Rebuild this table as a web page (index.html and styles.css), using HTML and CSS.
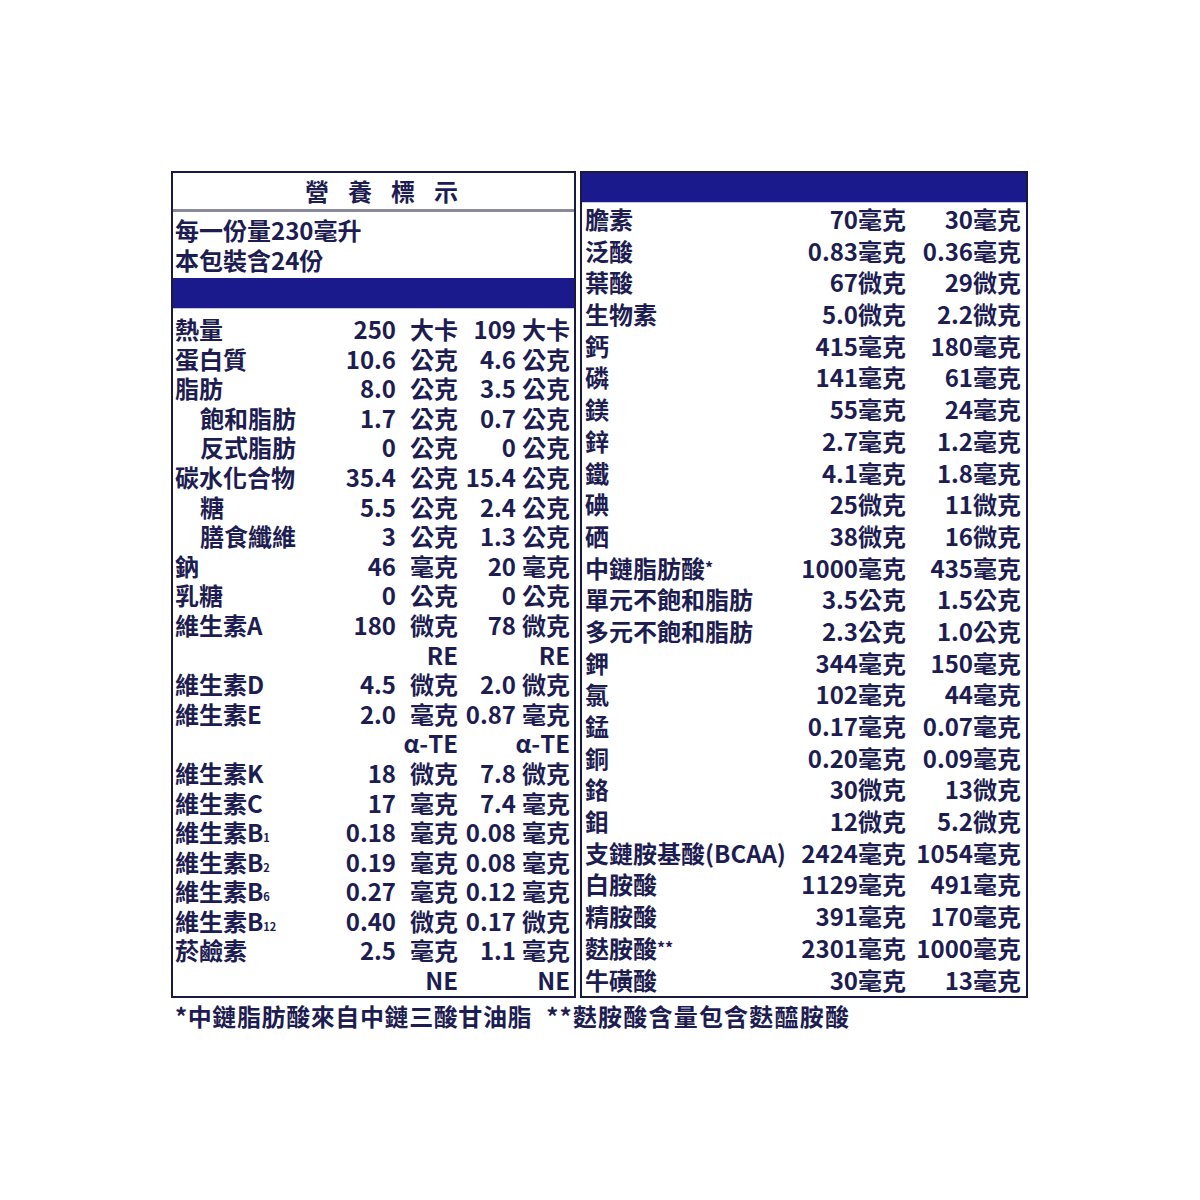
FILE: index.html
```html
<!DOCTYPE html>
<html lang="zh-Hant">
<head>
<meta charset="utf-8">
<title>營養標示</title>
<link rel="stylesheet" href="styles.css">
</head>
<body>
<div class="page">
  <div class="panels">
    <section class="panel left">
      <div class="title">營養標示</div>
      <div class="info">
        <div>每一份量230毫升</div>
        <div>本包裝含24份</div>
      </div>
      <div class="bar"></div>
      <div class="grid lgrid">
        <div class="n">熱量</div><div class="v">250</div><div class="u">大卡</div><div class="v">109</div><div class="u">大卡</div>
        <div class="n">蛋白質</div><div class="v">10.6</div><div class="u">公克</div><div class="v">4.6</div><div class="u">公克</div>
        <div class="n">脂肪</div><div class="v">8.0</div><div class="u">公克</div><div class="v">3.5</div><div class="u">公克</div>
        <div class="n ind">飽和脂肪</div><div class="v">1.7</div><div class="u">公克</div><div class="v">0.7</div><div class="u">公克</div>
        <div class="n ind">反式脂肪</div><div class="v">0</div><div class="u">公克</div><div class="v">0</div><div class="u">公克</div>
        <div class="n">碳水化合物</div><div class="v">35.4</div><div class="u">公克</div><div class="v">15.4</div><div class="u">公克</div>
        <div class="n ind">糖</div><div class="v">5.5</div><div class="u">公克</div><div class="v">2.4</div><div class="u">公克</div>
        <div class="n ind">膳食纖維</div><div class="v">3</div><div class="u">公克</div><div class="v">1.3</div><div class="u">公克</div>
        <div class="n">鈉</div><div class="v">46</div><div class="u">毫克</div><div class="v">20</div><div class="u">毫克</div>
        <div class="n">乳糖</div><div class="v">0</div><div class="u">公克</div><div class="v">0</div><div class="u">公克</div>
        <div class="n">維生素A</div><div class="v">180</div><div class="u">微克</div><div class="v">78</div><div class="u">微克</div>
        <div class="n"></div><div class="s1">RE</div><div class="s2">RE</div>
        <div class="n">維生素D</div><div class="v">4.5</div><div class="u">微克</div><div class="v">2.0</div><div class="u">微克</div>
        <div class="n">維生素E</div><div class="v">2.0</div><div class="u">毫克</div><div class="v">0.87</div><div class="u">毫克</div>
        <div class="n"></div><div class="s1">α-TE</div><div class="s2">α-TE</div>
        <div class="n">維生素K</div><div class="v">18</div><div class="u">微克</div><div class="v">7.8</div><div class="u">微克</div>
        <div class="n">維生素C</div><div class="v">17</div><div class="u">毫克</div><div class="v">7.4</div><div class="u">毫克</div>
        <div class="n">維生素B<span class="sub">1</span></div><div class="v">0.18</div><div class="u">毫克</div><div class="v">0.08</div><div class="u">毫克</div>
        <div class="n">維生素B<span class="sub">2</span></div><div class="v">0.19</div><div class="u">毫克</div><div class="v">0.08</div><div class="u">毫克</div>
        <div class="n">維生素B<span class="sub">6</span></div><div class="v">0.27</div><div class="u">毫克</div><div class="v">0.12</div><div class="u">毫克</div>
        <div class="n">維生素B<span class="sub">12</span></div><div class="v">0.40</div><div class="u">微克</div><div class="v">0.17</div><div class="u">微克</div>
        <div class="n">菸鹼素</div><div class="v">2.5</div><div class="u">毫克</div><div class="v">1.1</div><div class="u">毫克</div>
        <div class="n"></div><div class="s1">NE</div><div class="s2">NE</div>
      </div>
    </section>
    <section class="panel right">
      <div class="bar rbar"></div>
      <div class="grid rgrid">
        <div class="n">膽素</div><div class="c">70毫克</div><div class="c">30毫克</div>
        <div class="n">泛酸</div><div class="c">0.83毫克</div><div class="c">0.36毫克</div>
        <div class="n">葉酸</div><div class="c">67微克</div><div class="c">29微克</div>
        <div class="n">生物素</div><div class="c">5.0微克</div><div class="c">2.2微克</div>
        <div class="n">鈣</div><div class="c">415毫克</div><div class="c">180毫克</div>
        <div class="n">磷</div><div class="c">141毫克</div><div class="c">61毫克</div>
        <div class="n">鎂</div><div class="c">55毫克</div><div class="c">24毫克</div>
        <div class="n">鋅</div><div class="c">2.7毫克</div><div class="c">1.2毫克</div>
        <div class="n">鐵</div><div class="c">4.1毫克</div><div class="c">1.8毫克</div>
        <div class="n">碘</div><div class="c">25微克</div><div class="c">11微克</div>
        <div class="n">硒</div><div class="c">38微克</div><div class="c">16微克</div>
        <div class="n">中鏈脂肪酸<span class="star">*</span></div><div class="c">1000毫克</div><div class="c">435毫克</div>
        <div class="n">單元不飽和脂肪</div><div class="c">3.5公克</div><div class="c">1.5公克</div>
        <div class="n">多元不飽和脂肪</div><div class="c">2.3公克</div><div class="c">1.0公克</div>
        <div class="n">鉀</div><div class="c">344毫克</div><div class="c">150毫克</div>
        <div class="n">氯</div><div class="c">102毫克</div><div class="c">44毫克</div>
        <div class="n">錳</div><div class="c">0.17毫克</div><div class="c">0.07毫克</div>
        <div class="n">銅</div><div class="c">0.20毫克</div><div class="c">0.09毫克</div>
        <div class="n">鉻</div><div class="c">30微克</div><div class="c">13微克</div>
        <div class="n">鉬</div><div class="c">12微克</div><div class="c">5.2微克</div>
        <div class="n">支鏈胺基酸(BCAA)</div><div class="c">2424毫克</div><div class="c">1054毫克</div>
        <div class="n">白胺酸</div><div class="c">1129毫克</div><div class="c">491毫克</div>
        <div class="n">精胺酸</div><div class="c">391毫克</div><div class="c">170毫克</div>
        <div class="n">麩胺酸<span class="star">**</span></div><div class="c">2301毫克</div><div class="c">1000毫克</div>
        <div class="n">牛磺酸</div><div class="c">30毫克</div><div class="c">13毫克</div>
      </div>
    </section>
  </div>
  <div class="note">
    <span class="note1">*中鏈脂肪酸來自中鏈三酸甘油脂</span>
    <span class="note2">**麩胺酸含量包含麩醯胺酸</span>
  </div>
</div>
</body>
</html>
```
FILE: styles.css
```css
html, body {
  margin: 0;
  padding: 0;
  background: #ffffff;
}
body {
  font-family: "Noto Sans CJK TC", "Noto Sans", sans-serif;
  color: #1d1d52;
  font-weight: 700;
}
.page {
  padding: 171px 0 0 171px;
}
.panels {
  display: flex;
  gap: 4px;
  align-items: stretch;
}
.panel {
  border: 2px solid #1a1a3e;
  box-sizing: border-box;
  height: 827px;
}
.left {
  width: 405px;
}
.right {
  width: 448px;
}
.title {
  height: 36px;
  line-height: 36px;
  font-size: 24px;
  letter-spacing: 19px;
  padding-left: 132px;
  border-bottom: 3px solid #8a8a9a;
}
.info {
  font-size: 24px;
  line-height: 30px;
  padding: 3px 0 3px 2px;
}
.bar {
  height: 30px;
  background: #1a1a8c;
  border-bottom: 1px solid #c8c8d4;
}
.rbar {
  height: 29px;
}
.grid {
  display: grid;
  font-size: 24px;
  white-space: nowrap;
}
.lgrid {
  grid-template-columns: 165px 56px 62px 58px 54px;
  grid-auto-rows: 29.6px;
  line-height: 29.6px;
  padding: 5px 0 0 2px;
}
.lgrid .v, .lgrid .u {
  text-align: right;
}
.lgrid .s1 {
  grid-column: 2 / 4;
  text-align: right;
}
.lgrid .s2 {
  grid-column: 4 / 6;
  text-align: right;
}
.ind {
  padding-left: 25px;
}
.sub {
  font-size: 11px;
  vertical-align: baseline;
}
.rgrid {
  grid-template-columns: 210px 111px 115px;
  grid-auto-rows: 31.7px;
  line-height: 31.7px;
  padding: 0 0 0 3px;
}
.rgrid .c {
  text-align: right;
}
.star {
  font-size: 16px;
  vertical-align: 4px;
}
.note {
  display: flex;
  gap: 14px;
  margin: 3px 0 0 4px;
  font-size: 24px;
  line-height: 30px;
  white-space: nowrap;
}
.note1 {
  letter-spacing: 0.6px;
}
.note2 {
  letter-spacing: 1.2px;
}
```
